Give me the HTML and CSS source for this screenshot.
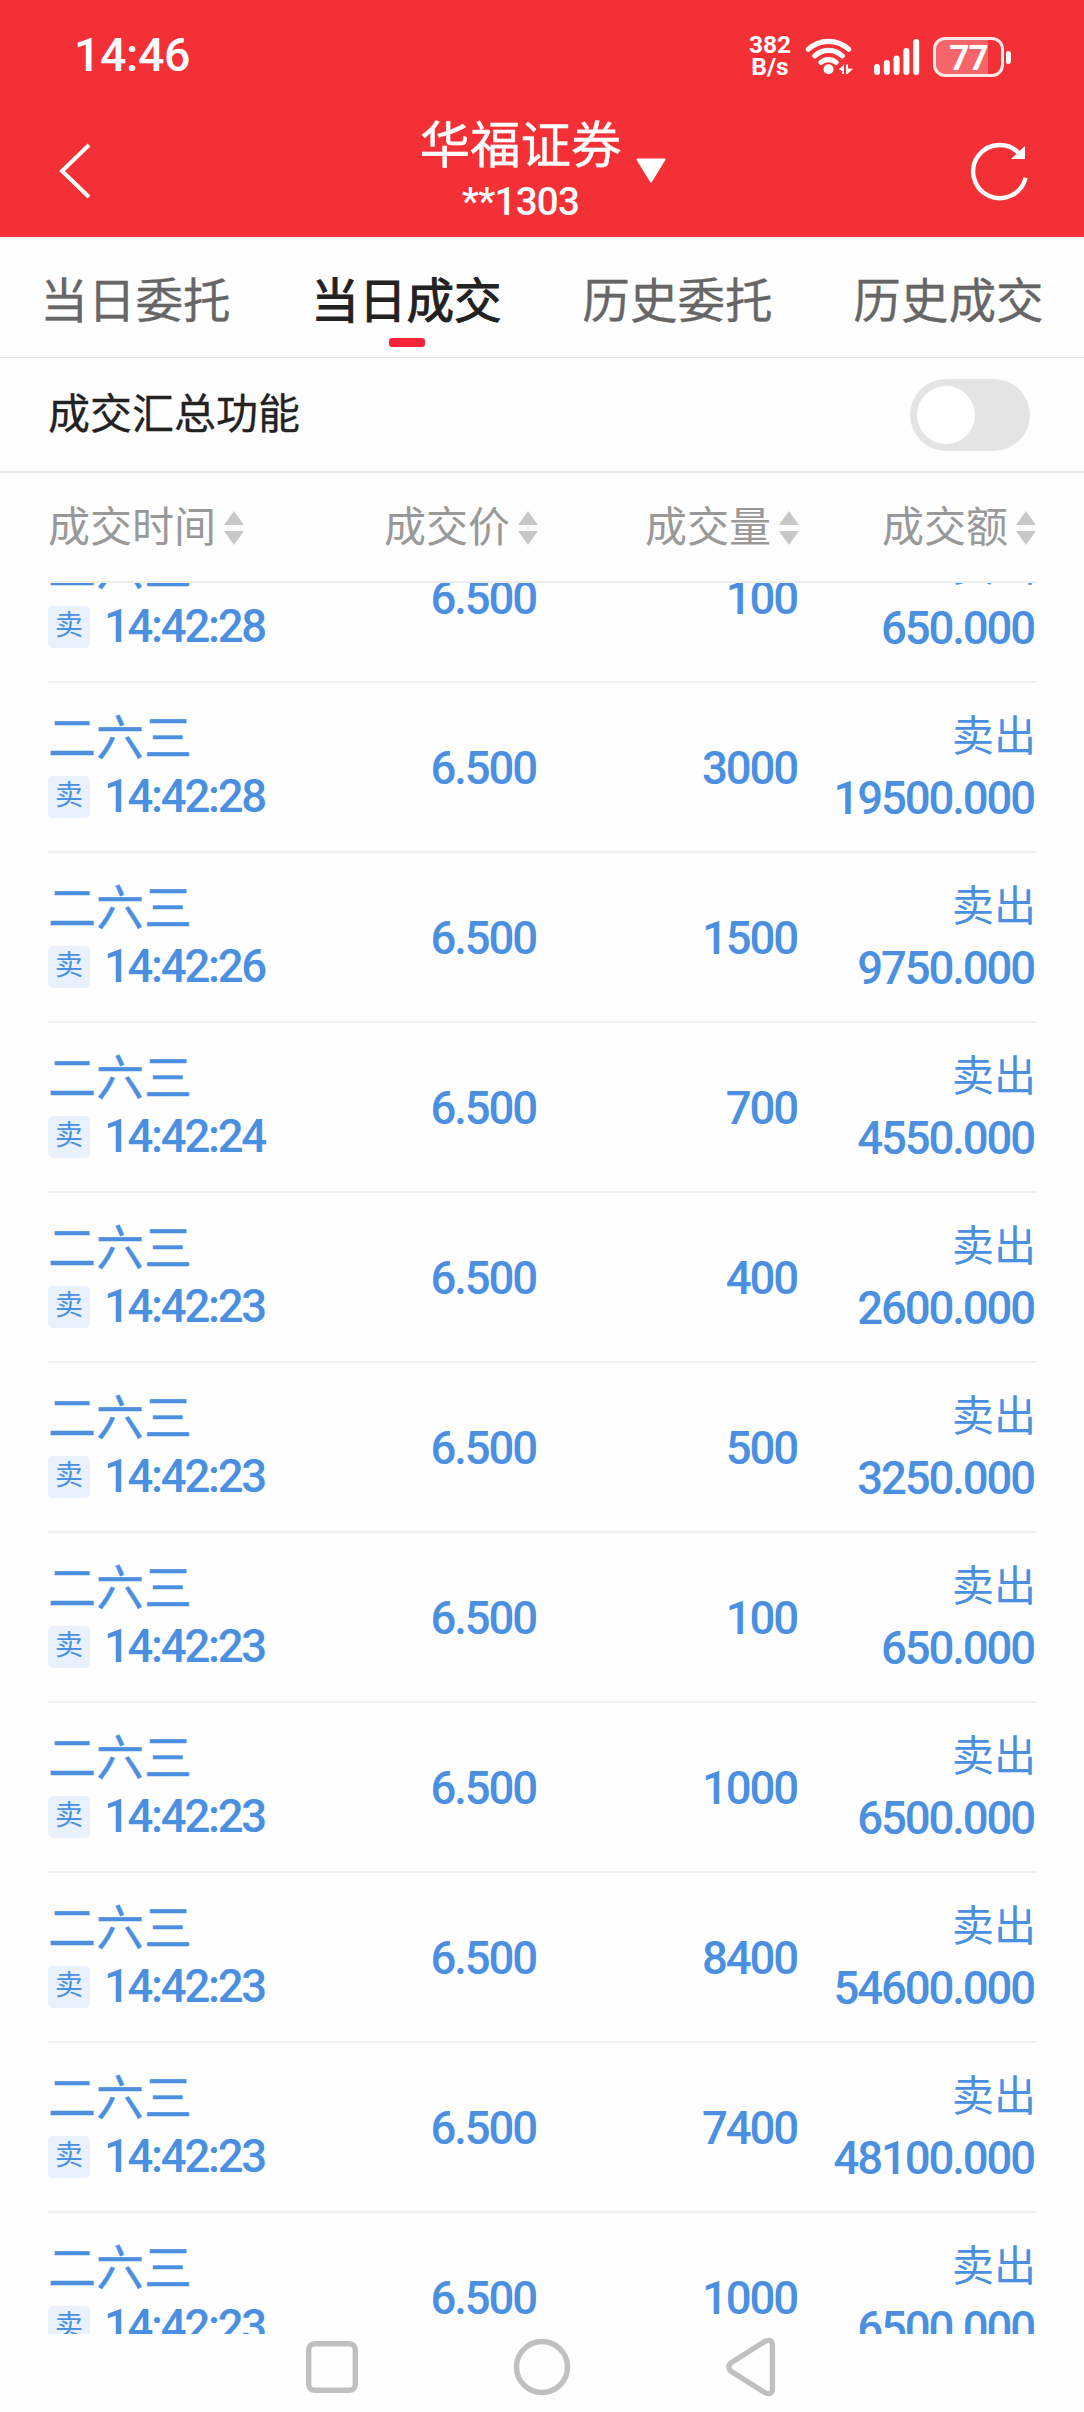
FILE: index.html
```html
<!DOCTYPE html>
<html lang="zh-CN">
<head>
<meta charset="utf-8">
<title>当日成交</title>
<link rel="stylesheet" href="styles.css">
</head>
<body>
<div class="screen">
  <header class="header">
    <div class="status">
      <span class="clock">14:46</span>
      <div class="speed"><span>382</span><span>B/s</span></div>
      <svg class="wifi" width="50" height="40" viewBox="0 0 50 40" fill="none" stroke="#fff" stroke-width="5.2" stroke-linecap="round">
        <path d="M3.4 13.2a29.5 29.5 0 0 1 40.2 0M9.8 19.8a20 20 0 0 1 27.4 0M16 26.4a11.4 11.4 0 0 1 15 0"/>
        <circle cx="23.5" cy="33.3" r="5" fill="#fff" stroke="none"/>
        <path d="M39 28.5v9.5h-1.8v-3L34 33.2zM41 28.5h2v4l5 .3L42.5 38H41z" fill="#fff" stroke="none"/>
      </svg>
      <svg class="signal" width="46" height="38" viewBox="0 0 46 38" fill="#fff">
        <rect x="0" y="26" width="6" height="11" rx="3"/><rect x="9.8" y="22" width="6" height="15" rx="3"/><rect x="19.6" y="17.5" width="6" height="19.5" rx="3"/><rect x="29.4" y="10" width="6" height="27" rx="3"/><rect x="39.2" y="1" width="6" height="36" rx="3"/>
      </svg>
      <div class="battery"><span>77</span></div>
      <div class="battery-tip"></div>
    </div>
    <div class="titlebar">
      <svg class="back" width="34" height="58" viewBox="0 0 34 58" fill="none" stroke="#fff" stroke-width="4"><path d="M31 3L4 29l27 26"/></svg>
      <div class="account">
        <div class="account-text"><h1>华福证券</h1><span>**1303</span></div>
        <svg class="caret" width="30" height="26" viewBox="0 0 30 26" fill="#fff" stroke="#fff" stroke-width="2" stroke-linejoin="round"><path d="M1.5 1.5h27L15 23.5z"/></svg>
      </div>
      <svg class="refresh" width="60" height="60" viewBox="0 0 60 60" fill="none" stroke="#fff" stroke-width="4.4"><path d="M50.2 13.6A26.6 26.6 0 1 0 55.6 36.8"/><path d="M55 5V18H41z" fill="#fff" stroke="none"/></svg>
    </div>
  </header>

  <nav class="tabs">
    <span class="tab">当日委托</span><span class="tab active">当日成交</span><span class="tab">历史委托</span><span class="tab">历史成交</span>
  </nav>

  <div class="summary"><span>成交汇总功能</span><div class="toggle"></div></div>

  <div class="grid head">
    <div>成交时间<i class="sort"></i></div><div>成交价<i class="sort"></i></div><div>成交量<i class="sort"></i></div><div>成交额<i class="sort"></i></div>
  </div>

  <main class="list">
    <div class="grid row"><div class="stock"><b>二六三</b><p><em>卖</em><span>14:42:28</span></p></div><span>6.500</span><span>100</span><div class="amount"><b>卖出</b><span>650.000</span></div></div>
    <div class="grid row"><div class="stock"><b>二六三</b><p><em>卖</em><span>14:42:28</span></p></div><span>6.500</span><span>3000</span><div class="amount"><b>卖出</b><span>19500.000</span></div></div>
    <div class="grid row"><div class="stock"><b>二六三</b><p><em>卖</em><span>14:42:26</span></p></div><span>6.500</span><span>1500</span><div class="amount"><b>卖出</b><span>9750.000</span></div></div>
    <div class="grid row"><div class="stock"><b>二六三</b><p><em>卖</em><span>14:42:24</span></p></div><span>6.500</span><span>700</span><div class="amount"><b>卖出</b><span>4550.000</span></div></div>
    <div class="grid row"><div class="stock"><b>二六三</b><p><em>卖</em><span>14:42:23</span></p></div><span>6.500</span><span>400</span><div class="amount"><b>卖出</b><span>2600.000</span></div></div>
    <div class="grid row"><div class="stock"><b>二六三</b><p><em>卖</em><span>14:42:23</span></p></div><span>6.500</span><span>500</span><div class="amount"><b>卖出</b><span>3250.000</span></div></div>
    <div class="grid row"><div class="stock"><b>二六三</b><p><em>卖</em><span>14:42:23</span></p></div><span>6.500</span><span>100</span><div class="amount"><b>卖出</b><span>650.000</span></div></div>
    <div class="grid row"><div class="stock"><b>二六三</b><p><em>卖</em><span>14:42:23</span></p></div><span>6.500</span><span>1000</span><div class="amount"><b>卖出</b><span>6500.000</span></div></div>
    <div class="grid row"><div class="stock"><b>二六三</b><p><em>卖</em><span>14:42:23</span></p></div><span>6.500</span><span>8400</span><div class="amount"><b>卖出</b><span>54600.000</span></div></div>
    <div class="grid row"><div class="stock"><b>二六三</b><p><em>卖</em><span>14:42:23</span></p></div><span>6.500</span><span>7400</span><div class="amount"><b>卖出</b><span>48100.000</span></div></div>
    <div class="grid row"><div class="stock"><b>二六三</b><p><em>卖</em><span>14:42:23</span></p></div><span>6.500</span><span>1000</span><div class="amount"><b>卖出</b><span>6500.000</span></div></div>
  </main>

  <footer class="navbar">
    <svg width="60" height="60" viewBox="0 0 60 60"><rect x="6.7" y="6.7" width="46.6" height="46.6" rx="6"/></svg>
    <svg width="60" height="60" viewBox="0 0 60 60"><circle cx="30" cy="30" r="25.5"/></svg>
    <svg width="60" height="60" viewBox="0 0 60 60"><path d="M8.8 26L42.5 4.6Q50.4 0.8 50.4 8.5v43Q50.4 59.2 42.5 55.4L8.8 34Q4.6 30 8.8 26z"/></svg>
  </footer>
</div>
</body>
</html>
```
FILE: styles.css
```css
* { box-sizing: border-box; }
body { margin: 0; background: #fefefe; font-family: Roboto, "Noto Sans CJK SC", sans-serif; }
h1, p { margin: 0; }
svg { display: block; flex: none; }

.screen { display: flex; flex-direction: column; width: 1084px; height: 2412px; overflow: hidden; background: #fefefe; }

.header { height: 237px; background: #f23035; color: #fff; }
.status { display: flex; align-items: center; height: 114px; padding: 0 73px 0 74px; }
.clock { margin-right: auto; font-size: 46.5px; line-height: 50px; font-weight: 500; letter-spacing: -0.4px; padding-bottom: 4px; }
.speed { display: flex; flex-direction: column; align-items: center; width: 46px; padding-bottom: 2px; font-size: 24.5px; line-height: 22px; font-weight: 700; }
.wifi { margin-left: 12px; margin-bottom: 2px; }
.signal { margin-left: 19px; margin-bottom: 1px; }
.battery { display: flex; align-items: center; justify-content: center; width: 71px; height: 40px; margin-left: 13px; border: 3px solid #ffe9e9; border-radius: 12px; background: linear-gradient(90deg, #f6656a 52px, transparent 52px); font-size: 35px; line-height: 34px; font-weight: 700; letter-spacing: -0.8px; }
.battery span { padding-top: 3px; }
.battery-tip { width: 5px; height: 13px; margin-left: 2px; border-radius: 2px 3px 3px 2px; background: #fff; }

.titlebar { display: flex; align-items: center; justify-content: space-between; height: 114px; padding: 0 54px 0 58px; }
.account { display: flex; align-items: center; gap: 14px; margin-left: 23px; }
.account-text { display: flex; flex-direction: column; align-items: center; }
.account h1 { font-size: 50.5px; line-height: 62px; font-weight: 400; -webkit-text-stroke: 0.4px; }
.account span { font-size: 38.5px; line-height: 50px; font-weight: 500; letter-spacing: -0.7px; }

.tabs { display: grid; grid-template-columns: repeat(4, 271px); height: 121px; border-bottom: 1px solid #e6e6e6; }
.tab { position: relative; display: flex; justify-content: center; padding-top: 30px; font-size: 47.6px; line-height: 70px; color: #666; -webkit-text-stroke: 0.3px; }
.tab.active { color: #222; -webkit-text-stroke: 1px; }
.tab.active::after { content: ""; position: absolute; top: 101px; width: 36px; height: 9px; border-radius: 3px; background: #fc2238; }

.summary { display: flex; align-items: center; justify-content: space-between; height: 115px; padding: 0 54px 0 48px; border-bottom: 2px solid #e8e8e8; font-size: 42px; line-height: 60px; color: #222; -webkit-text-stroke: 0.3px; }
.toggle { display: flex; align-items: center; width: 120px; height: 72px; padding-left: 7px; margin-top: 1px; border-radius: 36px; background: #e4e4e4; }
.toggle::before { content: ""; width: 58px; height: 58px; border-radius: 50%; background: #fff; }

.grid { display: grid; grid-template-columns: 230px 260px 261px 237px; align-items: center; margin: 0 48px; flex: none; }
.head { height: 110px; padding-top: 1px; border-bottom: 2px solid #ededed; font-size: 42px; line-height: 60px; color: #999; }
.head > div { display: flex; align-items: center; gap: 8px; justify-content: flex-end; }
.head > div:first-child { justify-content: flex-start; }
.sort { display: flex; flex-direction: column; gap: 6px; }
.sort::before, .sort::after { content: ""; border: 0 solid transparent; border-width: 0 10px; }
.sort::before { border-bottom: 14.5px solid #c8c8c8; }
.sort::after { border-top: 14.5px solid #c8c8c8; }

.list { height: 1751px; overflow: hidden; color: #4a8fe0; }
.row { height: 170px; border-bottom: 2px solid #eee; font-size: 45.5px; line-height: 50px; font-weight: 500; letter-spacing: -2.1px; text-align: right; }
.row:first-child { margin-top: -70px; }
.row > span { padding: 4px 2px 0 0; }
.row b { font-weight: 400; letter-spacing: 0; }
.stock { display: flex; flex-direction: column; text-align: left; gap: 5px; padding-bottom: 1px; }
.stock b { font-size: 48px; line-height: 56px; white-space: nowrap; -webkit-text-stroke: 0.3px; }
.stock p { display: flex; align-items: center; gap: 14px; }
.stock p span { letter-spacing: -2.3px; }
.stock em { width: 42px; height: 42px; margin-bottom: 1px; border-radius: 5px; background: #e9f2fc; font-size: 28px; line-height: 40px; font-style: normal; font-weight: 400; letter-spacing: 0; text-align: center; }
.amount { display: flex; flex-direction: column; gap: 9px; padding-bottom: 1px; }
.amount b { font-size: 42px; line-height: 56px; }
.amount span { padding-right: 2px; }

.navbar { display: flex; justify-content: center; gap: 150px; height: 78px; padding-top: 3px; }
.navbar svg { fill: none; stroke: #c0c0c0; stroke-width: 5.4; }
```
